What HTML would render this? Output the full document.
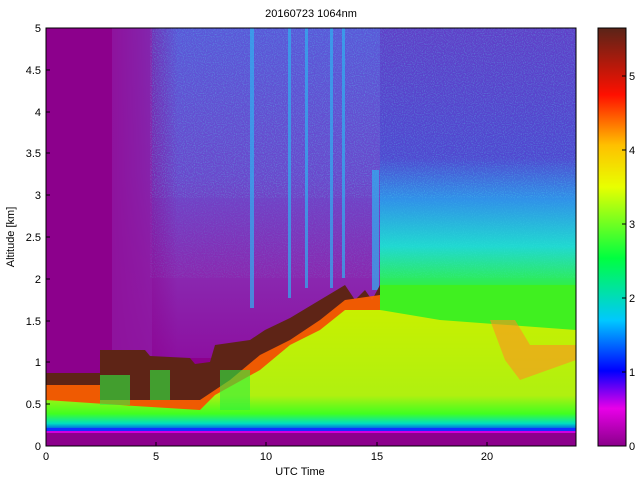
<!DOCTYPE html>
<html><head><meta charset="utf-8"><style>
html,body{margin:0;padding:0;background:#fff;width:640px;height:480px;overflow:hidden}
svg{display:block}
text{font-family:"Liberation Sans",sans-serif;font-size:11px;fill:#000}
</style></head><body>
<svg width="640" height="480" viewBox="0 0 640 480">
<defs>
<clipPath id="pc"><rect x="46" y="28" width="530" height="418"/></clipPath>
<linearGradient id="cb" x1="0" y1="1" x2="0" y2="0">
<stop offset="0" stop-color="#8a008a"/>
<stop offset="0.09" stop-color="#e800e8"/>
<stop offset="0.18" stop-color="#0000ff"/>
<stop offset="0.3" stop-color="#00c8ff"/>
<stop offset="0.45" stop-color="#00ff40"/>
<stop offset="0.62" stop-color="#e8ff00"/>
<stop offset="0.72" stop-color="#ffc000"/>
<stop offset="0.84" stop-color="#ff1000"/>
<stop offset="1" stop-color="#5a2418"/>
</linearGradient>
<linearGradient id="bl" x1="0" y1="0" x2="0" y2="1">
<stop offset="0" stop-color="#c8f000"/>
<stop offset="0.7" stop-color="#b0f010"/>
<stop offset="0.85" stop-color="#40ff20"/>
<stop offset="0.93" stop-color="#00e0c0"/>
<stop offset="1" stop-color="#0010ff"/>
</linearGradient>
<linearGradient id="upv" x1="0" y1="0" x2="0" y2="1">
<stop offset="0" stop-color="#5a58d8"/>
<stop offset="0.45" stop-color="#6a48cc"/>
<stop offset="0.75" stop-color="#8a28b0"/>
<stop offset="1" stop-color="#8c10a0"/>
</linearGradient>
<linearGradient id="uph" x1="0" y1="0" x2="1" y2="0">
<stop offset="0" stop-color="#8c008c" stop-opacity="1"/>
<stop offset="0.1" stop-color="#8c008c" stop-opacity="0.6"/>
<stop offset="0.22" stop-color="#8c008c" stop-opacity="0"/>
<stop offset="1" stop-color="#8c008c" stop-opacity="0"/>
</linearGradient>
<linearGradient id="rt" x1="0" y1="0" x2="0" y2="1">
<stop offset="0" stop-color="#6040c8"/>
<stop offset="0.5" stop-color="#5048d0"/>
<stop offset="0.66" stop-color="#3090e8"/>
<stop offset="0.84" stop-color="#20d8d0"/>
<stop offset="1" stop-color="#30f040"/>
</linearGradient>
<filter id="nz" x="0" y="0" width="100%" height="100%"><feTurbulence type="fractalNoise" baseFrequency="0.9" numOctaves="1" seed="3"/><feColorMatrix values="0 0 0 0 0.1  0 0 0 0 0.9  0 0 0 0 0.9  0 0 0 -2.5 1.4"/></filter>
</defs>
<text x="311" y="17" text-anchor="middle">20160723 1064nm</text>
<g clip-path="url(#pc)">
<rect x="46" y="28" width="530" height="418" fill="#8c008c"/>
<rect x="112" y="28" width="464" height="330" fill="url(#upv)"/>
<rect x="112" y="28" width="300" height="330" fill="url(#uph)"/>
<rect x="112" y="28" width="40" height="330" fill="#9020a8" opacity="0.6"/>
<rect x="380" y="28" width="196" height="260" fill="url(#rt)"/>
<rect x="150" y="28" width="426" height="170" filter="url(#nz)" opacity="0.3"/>
<rect x="150" y="198" width="426" height="80" filter="url(#nz)" opacity="0.15"/>
<g fill="#30b0f0" opacity="0.7">
<rect x="250" y="28" width="4" height="280"/>
<rect x="288" y="28" width="3" height="270"/>
<rect x="305" y="28" width="3" height="260"/>
<rect x="330" y="28" width="3" height="260"/>
<rect x="342" y="28" width="3" height="250"/>
<rect x="372" y="170" width="7" height="120"/>
</g>
<polygon fill="#5e2416" points="46,373 100,373 100,350 145,350 150,356 190,358 195,364 210,362 215,345 250,340 265,330 290,318 320,300 345,285 355,300 365,290 372,300 380,285 380,430 46,430"/>
<polygon fill="#ff6000" opacity="0.9" points="46,385 100,385 100,400 180,400 200,400 230,380 260,355 290,340 320,320 345,300 380,295 380,430 46,430"/>
<polygon fill="#40f020" points="380,285 576,285 576,430 380,430"/>
<polygon fill="url(#bl)" points="46,400 120,405 200,410 215,395 260,370 290,345 320,330 345,310 380,310 440,320 576,330 576,432 46,432"/>
<polygon fill="#ff9020" opacity="0.6" points="490,320 515,320 530,345 576,345 576,360 520,380 505,360"/>
<g fill="#30f040" opacity="0.6">
<rect x="100" y="375" width="30" height="30"/>
<rect x="150" y="370" width="20" height="30"/>
<rect x="220" y="370" width="30" height="40"/>
</g>
<rect x="46" y="428" width="530" height="3" fill="#1030ff"/>
<rect x="46" y="431" width="530" height="2" fill="#d000e0"/>
<rect x="46" y="433" width="530" height="13" fill="#8c008c"/>
</g>
<rect x="46" y="28" width="530" height="418" fill="none" stroke="#000" stroke-width="1"/>
<g stroke="#000">
<line x1="46" y1="446" x2="50" y2="446"/><line x1="46" y1="404" x2="50" y2="404"/><line x1="46" y1="362" x2="50" y2="362"/><line x1="46" y1="321" x2="50" y2="321"/><line x1="46" y1="279" x2="50" y2="279"/><line x1="46" y1="237" x2="50" y2="237"/><line x1="46" y1="195" x2="50" y2="195"/><line x1="46" y1="153" x2="50" y2="153"/><line x1="46" y1="112" x2="50" y2="112"/><line x1="46" y1="70" x2="50" y2="70"/>
<line x1="156" y1="446" x2="156" y2="442"/><line x1="266" y1="446" x2="266" y2="442"/><line x1="377" y1="446" x2="377" y2="442"/><line x1="487" y1="446" x2="487" y2="442"/>
</g>
<g text-anchor="end">
<text x="41" y="450">0</text><text x="41" y="408">0.5</text><text x="41" y="366">1</text><text x="41" y="325">1.5</text><text x="41" y="283">2</text><text x="41" y="241">2.5</text><text x="41" y="199">3</text><text x="41" y="157">3.5</text><text x="41" y="116">4</text><text x="41" y="74">4.5</text><text x="41" y="32">5</text>
</g>
<g text-anchor="middle">
<text x="46" y="460">0</text><text x="156" y="460">5</text><text x="266" y="460">10</text><text x="377" y="460">15</text><text x="487" y="460">20</text>
<text x="300" y="475">UTC Time</text>
</g>
<text transform="translate(14,237) rotate(-90)" text-anchor="middle">Altitude [km]</text>
<rect x="598" y="28" width="28" height="418" fill="url(#cb)" stroke="#000"/>
<g stroke="#000">
<line x1="622" y1="372" x2="626" y2="372"/><line x1="622" y1="298" x2="626" y2="298"/><line x1="622" y1="224" x2="626" y2="224"/><line x1="622" y1="150" x2="626" y2="150"/><line x1="622" y1="76" x2="626" y2="76"/>
</g>
<text x="629" y="450">0</text><text x="629" y="376">1</text><text x="629" y="302">2</text><text x="629" y="228">3</text><text x="629" y="154">4</text><text x="629" y="80">5</text>
</svg>
</body></html>
